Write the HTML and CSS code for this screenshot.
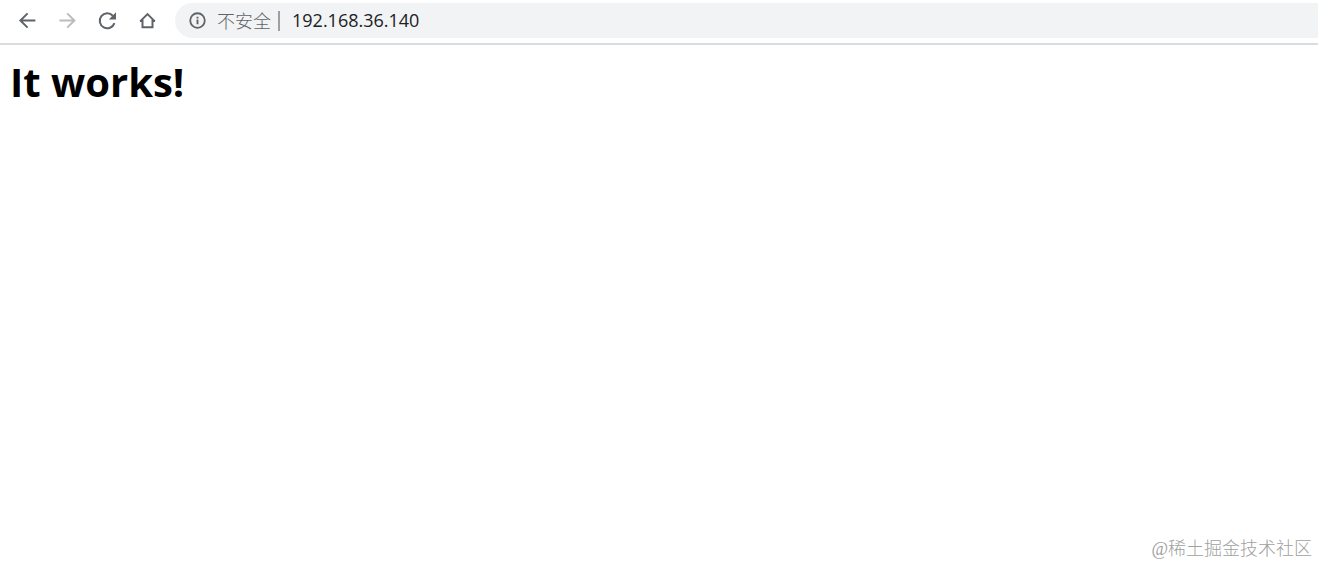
FILE: index.html
```html
<!DOCTYPE html>
<html lang="zh-CN">
<head>
<meta charset="utf-8">
<title>It works!</title>
<link rel="stylesheet" href="styles.css">
</head>
<body>
<header class="toolbar">
  <nav class="nav">
    <button class="nav-button" type="button" aria-label="Back">
      <svg class="icon" viewBox="0 0 24 24"><path class="line" d="M20.4 11.5H5.4M12.6 4.4L5.4 11.5l7.2 7.1"/></svg>
    </button>
    <button class="nav-button" type="button" aria-label="Forward" disabled>
      <svg class="icon" viewBox="0 0 24 24"><path class="line" d="M4.4 11.5h15M12.2 4.4l7.2 7.1-7.2 7.1"/></svg>
    </button>
    <button class="nav-button" type="button" aria-label="Reload">
      <svg class="icon" viewBox="0 0 24 24"><path class="line" d="M19.4 14.1A7.5 7.5 0 1 1 17.8 6.7"/><path class="solid" d="M21 3.3v7.2h-7.2z"/></svg>
    </button>
    <button class="nav-button" type="button" aria-label="Home">
      <svg class="icon" viewBox="0 0 24 24"><path class="line" d="M5.2 12.4l7.3-7.3 7.3 7.3M7.5 10.8v7.4h10v-7.4M5 12h3.4M16.6 12H20"/></svg>
    </button>
  </nav>
  <div class="address">
    <svg class="info" viewBox="0 0 18 18"><circle cx="9" cy="9" r="7.7" fill="none" stroke="currentColor" stroke-width="1.9"/><path fill="currentColor" d="M8 8h2v5H8zM8 5h2v2H8z"/></svg>
    <span class="security">不安全</span>
    <span class="divider"></span>
    <input class="url" type="text" value="192.168.36.140" aria-label="Address">
  </div>
</header>
<main class="page">
  <h1 class="title">It works!</h1>
</main>
<footer class="watermark">@稀土掘金技术社区</footer>
</body>
</html>
```
FILE: styles.css
```css
* {
  box-sizing: border-box;
}

body {
  margin: 0;
  min-height: 100vh;
  display: flex;
  flex-direction: column;
  background: #fff;
  color: #000;
  font-family: "Open Sans", "Noto Sans CJK SC", sans-serif;
}

.toolbar {
  display: flex;
  align-items: center;
  gap: 8px;
  padding: 3px 0 5px 7px;
  border-bottom: 2px solid #dadce0;
}

.nav {
  display: flex;
}

.nav-button {
  display: flex;
  align-items: center;
  justify-content: center;
  width: 40px;
  height: 32px;
  padding: 0;
  border: 0;
  background: none;
  color: #5f6368;
}

.nav-button:disabled {
  color: #babcbe;
}

.icon {
  width: 24px;
  height: 24px;
}

.line {
  fill: none;
  stroke: currentColor;
  stroke-width: 2;
}

.solid {
  fill: currentColor;
}

.address {
  flex: 1;
  display: flex;
  align-items: center;
  height: 35px;
  padding-left: 14px;
  border-radius: 18px 0 0 18px;
  background: #f1f3f4;
  color: #5f6368;
}

.info {
  width: 17px;
  height: 17px;
}

.security {
  margin-left: 11px;
  padding-bottom: 2px;
  font-family: "Noto Sans CJK SC", sans-serif;
  font-weight: 300;
  font-size: 18px;
  line-height: 24px;
}

.divider {
  width: 2px;
  height: 20px;
  margin: 0 12px 0 7px;
  background: #9aa0a6;
}

.url {
  flex: 1;
  min-width: 0;
  padding: 0 0 2px;
  border: 0;
  outline: 0;
  background: none;
  color: #202124;
  font: 18px/24px "Open Sans", sans-serif;
}

.page {
  flex: 1;
  padding: 8px 10px;
}

.title {
  margin: 0;
  font-size: 40px;
  line-height: 58px;
  font-weight: 700;
}

.watermark {
  padding: 0 6px 4px;
  color: #a0a0a0;
  font-family: "Liberation Serif", "Noto Sans CJK SC", serif;
  font-weight: 300;
  font-size: 18px;
  line-height: 24px;
  text-align: right;
}
```
